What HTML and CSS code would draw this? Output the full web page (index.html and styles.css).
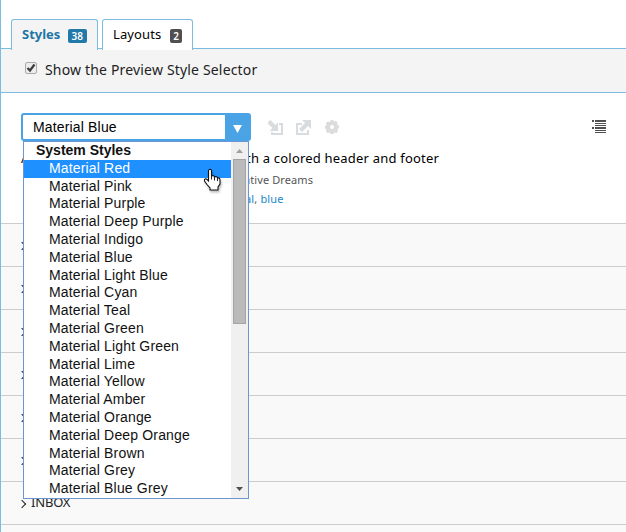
FILE: index.html
```
<!DOCTYPE html>
<html lang="en">
<head>
<meta charset="utf-8">
<title>Styles</title>
<link rel="stylesheet" href="styles.css">
</head>
<body>
<div class="page">
  <nav class="tabs">
    <div class="tab active"><span class="tab-name">Styles</span><span class="count">38</span></div>
    <div class="tab"><span class="tab-name layouts">Layouts</span><span class="count dark">2</span></div>
  </nav>
  <label class="option">
    <svg class="check" width="12" height="12" viewBox="0 0 12 12"><rect x=".5" y=".5" width="11" height="11" rx="1.5" fill="#ededed" stroke="#aaa"/><path d="M2.5 6l2.5 2.5L9.5 2.5" fill="none" stroke="#3c3c3c" stroke-width="2.2"/></svg>
    <span class="option-text">Show the Preview Style Selector</span>
  </label>
  <section class="style">
    <div class="toolbar">
      <div class="select">
        <span class="value">Material Blue</span>
        <span class="arrow"><svg width="9" height="8" viewBox="0 0 9 8"><path d="M0 0h9L4.5 8z" fill="#fff"/></svg></span>
        <div class="menu">
          <div class="items">
            <div class="group">System Styles</div>
            <div class="item selected">Material Red</div>
            <div class="item">Material Pink</div>
            <div class="item">Material Purple</div>
            <div class="item">Material Deep Purple</div>
            <div class="item">Material Indigo</div>
            <div class="item">Material Blue</div>
            <div class="item">Material Light Blue</div>
            <div class="item">Material Cyan</div>
            <div class="item">Material Teal</div>
            <div class="item">Material Green</div>
            <div class="item">Material Light Green</div>
            <div class="item">Material Lime</div>
            <div class="item">Material Yellow</div>
            <div class="item">Material Amber</div>
            <div class="item">Material Orange</div>
            <div class="item">Material Deep Orange</div>
            <div class="item">Material Brown</div>
            <div class="item">Material Grey</div>
            <div class="item">Material Blue Grey</div>
          </div>
          <div class="scrollbar">
            <svg width="7" height="4" viewBox="0 0 7 4"><path d="M0 4L3.5 0 7 4z" fill="#a0a0a0"/></svg>
            <div class="thumb"></div>
            <svg class="down" width="7" height="4" viewBox="0 0 7 4"><path d="M0 0h7L3.5 4z" fill="#505050"/></svg>
          </div>
          <svg class="cursor" width="20" height="25" viewBox="0 0 20 25"><path d="M6.5 1.5Q8.5 1 8.5 3V8Q11 7 11.5 9Q14 8 14.5 10Q17 9.5 17 12V16L15 19V22H7V20L4 16.5L1.5 13Q1 10.5 3.5 11L5.5 13V3Q5.5 1.8 6.5 1.5Z" fill="#fff" stroke="#111" stroke-width="1.1"/><path d="M8.5 7.5v4M11.5 9v3.5M14.5 10v3" stroke="#222" fill="none"/></svg>
        </div>
      </div>
      <svg class="actions" width="72" height="16" viewBox="0 0 72 16" fill="#d9dcdf">
        <path d="M0 2L2.500 0l5 5L10 2.500V11H1.500L4.500 8 0 4z"/><path d="M11 3h4v12H3v-3h2v1h8V5h-2z"/>
        <path d="M28 3h6v2h-4v8h9v-3h2v5H28zM34 0h9v9l-3-3-6 6-3-3 6-6z"/>
        <path fill-rule="evenodd" fill="#dcdcdc" d="M60.500 2l1.500-.5L63 0h2l1 1.500 2-.5 1.500 1.500-.5 2 2 1v2.500l-1.500 1 .5 2-1.500 2-2-.5L65.500 14h-3L61.500 12.500l-2 .5L58 11.500l.5-2L57 8.500V6l1.500-1-.5-2L59.500 1.500zM64 5a2 2 0 1 0 .1 0z"/>
      </svg>
      <svg class="list-icon" width="14" height="13" viewBox="0 0 14 13" fill="#505050"><path d="M0 0h2v2H0zM3 0h11v2H3zM3 3h11v1H3zM3 5h11v1H3zM0 7h2v2H0zM3 7h11v2H3zM3 10h11v1H3zM3 12h11v1H3z"/></svg>
    </div>
    <div class="details">
      <div class="description"><span>A</span><span class="desc-end">th a colored header and footer</span></div>
      <div class="author">ative Dreams</div>
      <div class="tags"><span class="tag">al</span>, <span class="tag">blue</span></div>
    </div>
  </section>
  <div class="row"><i class="chevron"></i></div>
  <div class="row"><i class="chevron"></i></div>
  <div class="row"><i class="chevron"></i></div>
  <div class="row"><i class="chevron"></i></div>
  <div class="row"><i class="chevron"></i></div>
  <div class="row"><i class="chevron"></i></div>
  <div class="row"><i class="chevron"></i><span class="row-name">INBOX</span></div>
  <div class="row"></div>
</div>
</body>
</html>
```
FILE: styles.css
```
* { box-sizing: border-box; }
body { margin: 0; background: #fff; color: #000; font: 13px "Noto Sans", sans-serif; overflow: hidden; }
svg { display: block; flex: none; }
.page { height: 532px; border-left: 1px solid #7abde0; overflow: hidden; white-space: nowrap; }
.tabs { height: 49px; padding: 19px 0 0 10px; display: flex; gap: 4px; border-bottom: 1px solid #7abde0; }
.tab { width: 87px; height: 31px; border: 1px solid #7abde0; border-bottom: 0; border-radius: 3px 3px 0 0; background: #fff; display: flex; align-items: center; padding: 0 10px 2px; justify-content: space-between; position: relative; z-index: 1; }
.tab + .tab { width: 91px; }
.active { background: #f4f4f4; color: #2175a5; font-weight: bold; }
.layouts { letter-spacing: .1px; }
.count { height: 14px; padding: 0 4px; margin-top: 3px; border-radius: 2px; background: #2278a8; color: #fff; font-size: 10px; line-height: 14px; font-weight: 600; }
.dark { background: #505050; padding: 0 3px; }
.option { height: 44px; padding-left: 24px; display: flex; align-items: center; gap: 8px; background: #f4f4f4; border-bottom: 1px solid #7abde0; }
.check { margin-top: -5px; }
.option-text { margin-top: -2px; color: #222; font-size: 14px; letter-spacing: .17px; }
.style { height: 130px; padding-top: 20px; }
.toolbar { height: 28px; margin-left: 20px; display: flex; align-items: flex-start; }
.select { width: 230px; height: 28px; position: relative; display: flex; border: 2px solid #4aa3e5; border-radius: 3px; font: 14px/25px "Liberation Sans", Arial, sans-serif; letter-spacing: .16px; }
.value { flex: 1; padding-left: 10px; }
.arrow { width: 24px; background: #4aa3e5; display: flex; align-items: center; justify-content: center; padding-top: 3px; }
.menu { position: absolute; z-index: 5; left: 0; top: 26px; width: 226px; height: 358px; border: 1px solid #6d96d0; background: #fff; display: flex; color: #111; }
.items { flex: 1; display: grid; grid-template-rows: repeat(20, 17.8px); line-height: 17px; }
.group { padding-left: 12px; font-weight: bold; letter-spacing: 0; }
.item { padding-left: 25px; }
.selected { background: #1e90ff; color: #fff; }
.scrollbar { width: 17px; background: #f0f0f0; display: flex; flex-direction: column; align-items: center; padding: 7px 0 7px; }
.thumb { width: 13px; height: 165px; margin-top: 6px; background: #bababa; border: 1px solid #a4a4a4; }
.down { margin-top: auto; }
.cursor { position: absolute; left: 179px; top: 26px; filter: drop-shadow(1px 2px 1px #0004); }
.actions { margin: 7px 0 0 17px; }
.list-icon { margin: 7px 20px 0 auto; }
.details { padding: 7px 0 0 20px; }
.description { height: 20px; line-height: 20px; display: flex; justify-content: space-between; width: 418px; }
.desc-end { letter-spacing: .2px; }
.author { margin: 2px 0 0 223px; height: 20px; line-height: 20px; font-size: 11px; color: #555; letter-spacing: .1px; }
.tags { margin-left: 224px; height: 18px; line-height: 18px; font-size: 11px; color: #666; letter-spacing: .15px; }
.tag { color: #2288c8; }
.row { height: 43px; border-top: 1px solid #ccc; background: #f9f9f9; display: flex; align-items: center; gap: 6px; padding: 0 0 2px 18px; }
.chevron { width: 6px; height: 6px; border: solid #222; border-width: 1px 1px 0 0; transform: rotate(45deg); margin-top: 3px; }
.row-name { color: #222; letter-spacing: -.2px; }
```
